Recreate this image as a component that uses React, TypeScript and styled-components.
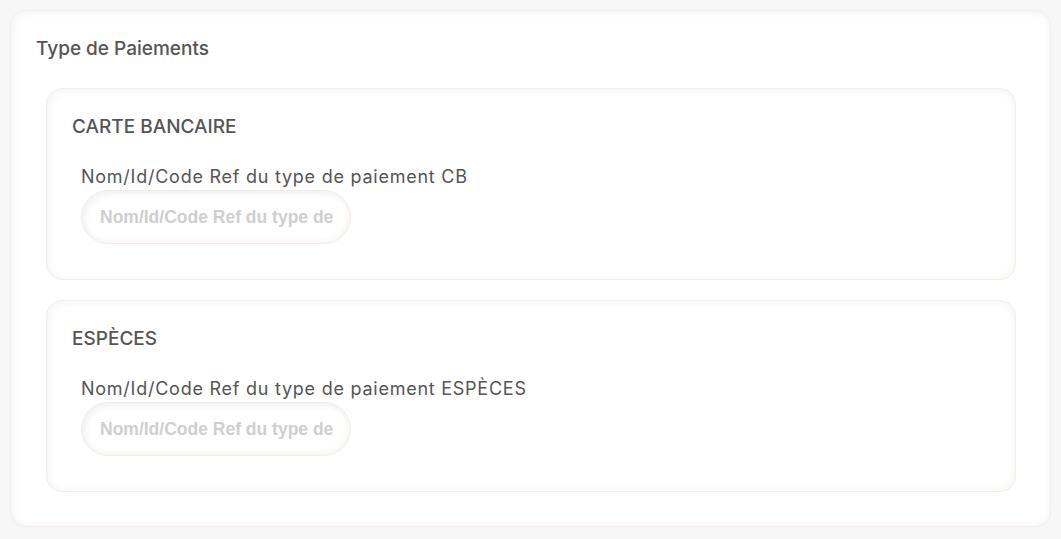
import styled, { createGlobalStyle } from "styled-components";

const GlobalStyle = createGlobalStyle`
  html, body {
    margin: 0;
    padding: 0;
    background: #f7f7f7;
  }
  body {
    font-family: Inter, "Noto Sans", sans-serif;
    color: #555;
  }
`;

const paymentTypes = [
  { title: "CARTE BANCAIRE", label: "Nom/Id/Code Ref du type de paiement CB" },
  { title: "ESPÈCES", label: "Nom/Id/Code Ref du type de paiement ESPÈCES" },
];

const App = () => {
  return (
    <Page>
      <GlobalStyle />
      <Card>
        <CardTitle>Type de Paiements</CardTitle>
        <SectionList>
          {paymentTypes.map((p) => (
            <Section key={p.title}>
              <SectionTitle>{p.title}</SectionTitle>
              <Field>
                <FieldLabel>{p.label}</FieldLabel>
                <PillInput placeholder="Nom/Id/Code Ref du type de paiement" />
              </Field>
            </Section>
          ))}
        </SectionList>
      </Card>
    </Page>
  );
};

export default App;

const Page = styled.div`
  padding: 10px 10px 12px 10px;
  min-height: 539px;
  box-sizing: border-box;
`;

const Card = styled.div`
  background: #fff;
  border-radius: 16px;
  border: 1px solid #f1eeec;
  box-shadow: inset 3px 3px 8px rgba(0, 0, 0, 0.035),
    inset -2px -2px 6px rgba(240, 215, 200, 0.18), 0 1px 2px rgba(0, 0, 0, 0.02);
  padding: 27px 34px 34px 25px;
`;

const CardTitle = styled.h2`
  margin: 0 0 28px 0;
  font-size: 19px;
  line-height: 22px;
  font-weight: 500;
  color: #555;
`;

const SectionList = styled.div`
  display: flex;
  flex-direction: column;
  gap: 20px;
  padding-left: 10px;
`;

const Section = styled.div`
  border-radius: 16px;
  border: 1px solid #f1eeec;
  background: #fff;
  box-shadow: inset 3px 3px 8px rgba(0, 0, 0, 0.035),
    inset -2px -2px 6px rgba(240, 215, 200, 0.2);
  padding: 27px 26px 35px 25px;
`;

const SectionTitle = styled.h3`
  margin: 0 0 28px 0;
  font-size: 19px;
  line-height: 22px;
  font-weight: 500;
  color: #555;
`;

const Field = styled.div`
  display: flex;
  flex-direction: column;
  align-items: flex-start;
  gap: 2px;
  padding-left: 9px;
`;

const FieldLabel = styled.label`
  font-size: 18px;
  line-height: 22px;
  font-weight: 400;
  letter-spacing: 0.75px;
  color: #555;
`;

const PillInput = styled.input`
  width: 270px;
  height: 54px;
  box-sizing: border-box;
  border-radius: 27px;
  border: 1px solid #f0ecea;
  background: #fff;
  box-shadow: inset 3px 3px 7px rgba(0, 0, 0, 0.05),
    inset -2px -2px 5px rgba(240, 215, 195, 0.25);
  padding: 0 12px 0 18px;
  font-family: "Liberation Sans", Arial, sans-serif;
  font-weight: 700;
  font-size: 17.5px;
  color: #555;
  outline: none;

  &::placeholder {
    color: #cfcfcf;
  }
`;
